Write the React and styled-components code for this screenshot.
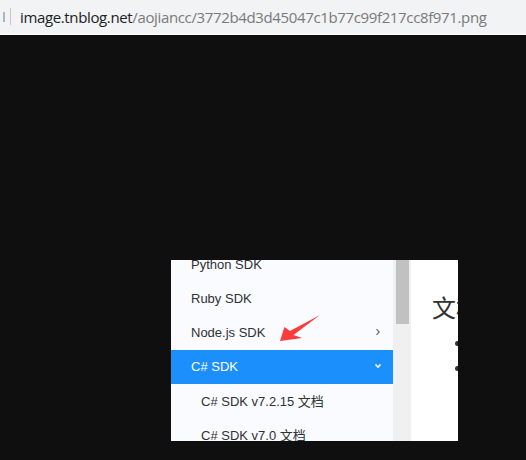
import React from "react";
import styled, { createGlobalStyle } from "styled-components";

const GlobalStyle = createGlobalStyle`
  html, body {
    margin: 0;
    padding: 0;
    background: #0f0f0f;
  }
  body {
    width: 526px;
    height: 460px;
    overflow: hidden;
    font-family: "Liberation Sans", Arial, sans-serif;
  }
`;

const Page = styled.div`
  width: 526px;
  height: 460px;
  display: flex;
  flex-direction: column;
  background: #0f0f0f;
`;

const AddressBar = styled.header`
  height: 33px;
  flex: none;
  display: flex;
  align-items: center;
  background: #f1f3f4;
  border-bottom: 2px solid #fafafa;
`;

const SiteIcon = styled.span`
  width: 3px;
  height: 10px;
  margin-right: 5px;
  border-right: 2px solid #8a9bb0;
  opacity: 0.7;
`;

const Divider = styled.span`
  width: 1px;
  height: 17px;
  background: #c4c7ca;
  margin-right: 9px;
`;

const Url = styled.div`
  font-family: "Open Sans", "Liberation Sans", sans-serif;
  font-size: 15px;
  letter-spacing: -0.36px;
  color: #7a7a7a;
  white-space: nowrap;
`;

const Host = styled.span`
  color: #202124;
`;

const Stage = styled.main`
  flex: 1;
  padding: 225px 0 0 171px;
  position: relative;
`;

const Shot = styled.div`
  width: 287px;
  height: 181px;
  display: flex;
  overflow: hidden;
  background: #fff;
`;

const Sidebar = styled.nav`
  width: 222px;
  flex: none;
  background: #f9fbff;
  overflow: hidden;
`;

const MenuList = styled.ul`
  list-style: none;
  margin: -12px 0 0;
  padding: 0;
`;

const Item = styled.li`
  box-sizing: border-box;
  height: 34px;
  display: flex;
  align-items: center;
  justify-content: space-between;
  padding: 0 11px 2px ${(p) => (p.$sub ? 30 : 20)}px;
  font-size: 13px;
  color: ${(p) => (p.$active ? "#ffffff" : "#303133")};
  background: ${(p) => (p.$active ? "#1b8ffc" : "transparent")};
  font-family: "Liberation Sans", "Noto Sans CJK SC", sans-serif;
`;

const Caret = styled.svg`
  width: 8px;
  height: 8px;
  flex: none;
`;

const Track = styled.div`
  width: 18px;
  flex: none;
  background: #f0f0f0;
  display: flex;
  justify-content: center;
`;

const Thumb = styled.div`
  width: 13px;
  height: 64px;
  background: #c1c1c1;
`;

const Content = styled.section`
  flex: 1;
  padding: 0 0 0 21px;
  overflow: hidden;
  color: #303133;
  font-family: "Noto Sans CJK SC", "Liberation Sans", sans-serif;
`;

const Title = styled.h1`
  margin: 31px 0 0;
  font-size: 24px;
  font-weight: 400;
  line-height: 32px;
  white-space: nowrap;
`;

const Bullets = styled.ul`
  margin: 7px 0 0;
  padding-left: 40px;
  font-size: 14px;
  line-height: 25px;
  white-space: nowrap;

  li {
    height: 25px;
  }
`;

const Arrow = styled.svg`
  position: absolute;
  left: 270px;
  top: 0;
  margin-top: 270px;
  width: 60px;
  height: 40px;
`;

function Chevron({ down }) {
  return (
    <Caret viewBox="0 0 8 8">
      {down ? (
        <path d="M1.5 2.5 L4 5 L6.5 2.5" stroke="#fff" strokeWidth="1.6" fill="none" />
      ) : (
        <path d="M2.5 1.2 L5.2 4 L2.5 6.8" stroke="#6b6f77" strokeWidth="1.2" fill="none" />
      )}
    </Caret>
  );
}

export default function App() {
  return (
    <Page>
      <GlobalStyle />
      <AddressBar>
        <SiteIcon />
        <Divider />
        <Url>
          <Host>image.tnblog.net</Host>/aojiancc/3772b4d3d45047c1b77c99f217cc8f971.png
        </Url>
      </AddressBar>
      <Stage>
        <Shot>
          <Sidebar>
            <MenuList>
              <Item>Python SDK</Item>
              <Item>Ruby SDK</Item>
              <Item>
                Node.js SDK
                <Chevron />
              </Item>
              <Item $active>
                C# SDK
                <Chevron down />
              </Item>
              <Item $sub>C# SDK v7.2.15 文档</Item>
              <Item $sub>C# SDK v7.0 文档</Item>
            </MenuList>
          </Sidebar>
          <Track>
            <Thumb />
          </Track>
          <Content>
            <Title>文档</Title>
            <Bullets>
              <li>概述</li>
              <li>安装</li>
            </Bullets>
          </Content>
        </Shot>
        <Arrow viewBox="270 305 60 40">
          <polygon
            points="280,341 284.5,327 290,331 320,315 293.5,335 302,338"
            fill="#ff3a3a"
          />
        </Arrow>
      </Stage>
    </Page>
  );
}
